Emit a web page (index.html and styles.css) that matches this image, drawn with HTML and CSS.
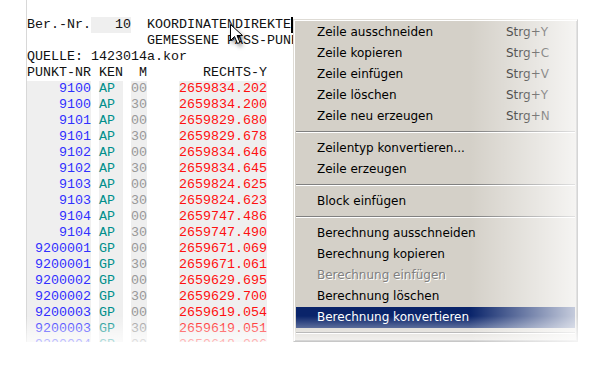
FILE: index.html
```html
<!DOCTYPE html>
<html>
<head>
<meta charset="utf-8">
<link rel="stylesheet" href="styles.css">
</head>
<body>
<div class="screen">
  <div class="editor">
    <div class="line">Ber.-Nr.<span class="cell">   10</span>  KOORDINATENDIREKTE<span class="caret"></span></div>
    <div class="line">               GEMESSENE PASS-PUNKTE</div>
    <div class="line">QUELLE: 1423014a.kor</div>
    <div class="line">PUNKT-NR KEN  M       RECHTS-Y</div>
    <div class="line"><span class="cell nr">    9100</span> <span class="cell ken">AP </span> <span class="cell m">00</span>    <span class="cell y">2659834.202</span></div>
    <div class="line"><span class="cell nr">    9100</span> <span class="cell ken">AP </span> <span class="cell m">30</span>    <span class="cell y">2659834.200</span></div>
    <div class="line"><span class="cell nr">    9101</span> <span class="cell ken">AP </span> <span class="cell m">00</span>    <span class="cell y">2659829.680</span></div>
    <div class="line"><span class="cell nr">    9101</span> <span class="cell ken">AP </span> <span class="cell m">30</span>    <span class="cell y">2659829.678</span></div>
    <div class="line"><span class="cell nr">    9102</span> <span class="cell ken">AP </span> <span class="cell m">00</span>    <span class="cell y">2659834.646</span></div>
    <div class="line"><span class="cell nr">    9102</span> <span class="cell ken">AP </span> <span class="cell m">30</span>    <span class="cell y">2659834.645</span></div>
    <div class="line"><span class="cell nr">    9103</span> <span class="cell ken">AP </span> <span class="cell m">00</span>    <span class="cell y">2659824.625</span></div>
    <div class="line"><span class="cell nr">    9103</span> <span class="cell ken">AP </span> <span class="cell m">30</span>    <span class="cell y">2659824.623</span></div>
    <div class="line"><span class="cell nr">    9104</span> <span class="cell ken">AP </span> <span class="cell m">00</span>    <span class="cell y">2659747.486</span></div>
    <div class="line"><span class="cell nr">    9104</span> <span class="cell ken">AP </span> <span class="cell m">30</span>    <span class="cell y">2659747.490</span></div>
    <div class="line"><span class="cell nr"> 9200001</span> <span class="cell ken">GP </span> <span class="cell m">00</span>    <span class="cell y">2659671.069</span></div>
    <div class="line"><span class="cell nr"> 9200001</span> <span class="cell ken">GP </span> <span class="cell m">30</span>    <span class="cell y">2659671.061</span></div>
    <div class="line"><span class="cell nr"> 9200002</span> <span class="cell ken">GP </span> <span class="cell m">00</span>    <span class="cell y">2659629.695</span></div>
    <div class="line"><span class="cell nr"> 9200002</span> <span class="cell ken">GP </span> <span class="cell m">30</span>    <span class="cell y">2659629.700</span></div>
    <div class="line"><span class="cell nr"> 9200003</span> <span class="cell ken">GP </span> <span class="cell m">00</span>    <span class="cell y">2659619.054</span></div>
    <div class="line"><span class="cell nr"> 9200003</span> <span class="cell ken">GP </span> <span class="cell m">30</span>    <span class="cell y">2659619.051</span></div>
    <div class="line"><span class="cell nr"> 9200004</span> <span class="cell ken">GP </span> <span class="cell m">00</span>    <span class="cell y">2659618.996</span></div>
  </div>

  <div class="menu">
    <div class="item"><span>Zeile ausschneiden</span><span>Strg+Y</span></div>
    <div class="item"><span>Zeile kopieren</span><span>Strg+C</span></div>
    <div class="item"><span>Zeile einfügen</span><span>Strg+V</span></div>
    <div class="item"><span>Zeile löschen</span><span>Strg+Y</span></div>
    <div class="item"><span>Zeile neu erzeugen</span><span>Strg+N</span></div>
    <div class="sep"></div>
    <div class="item"><span>Zeilentyp konvertieren...</span><span></span></div>
    <div class="item"><span>Zeile erzeugen</span><span></span></div>
    <div class="sep"></div>
    <div class="item"><span>Block einfügen</span><span></span></div>
    <div class="sep"></div>
    <div class="item"><span>Berechnung ausschneiden</span><span></span></div>
    <div class="item"><span>Berechnung kopieren</span><span></span></div>
    <div class="item disabled"><span>Berechnung einfügen</span><span></span></div>
    <div class="item"><span>Berechnung löschen</span><span></span></div>
    <div class="item active"><span>Berechnung konvertieren</span><span></span></div>
    <div class="sep"></div>
  </div>

  <div class="fade"></div>

  <svg class="mouse" width="16" height="24" viewBox="0 0 16 24">
    <path d="M0.5 0.5 L0.5 16.5 L4.5 12.5 L7.5 19.5 L10 18.5 L7 11.5 L12.5 11.5 Z" fill="#fff" stroke="#000" stroke-width="1" stroke-linejoin="miter"/>
  </svg>
</div>
</body>
</html>
```

FILE: styles.css
```css
html, body {
  margin: 0;
  padding: 0;
  background: #fff;
}

.screen {
  position: relative;
  width: 593px;
  height: 372px;
  overflow: hidden;
  padding-left: 26px;
  box-sizing: border-box;
}

.editor {
  width: 267px;
  height: 342px;
  box-sizing: border-box;
  border-left: 1px solid #d8d8d8;
  padding-top: 17px;
  overflow: hidden;
  font-family: "Liberation Mono", "Courier New", monospace;
  font-size: 13.333px;
  color: #111;
}

.line {
  height: 16px;
  line-height: 16px;
  white-space: pre;
}

.cell {
  display: inline-block;
  height: 16px;
  vertical-align: top;
  background: #efefef;
}

.nr { color: #3030ff; }
.ken { color: #00908c; }
.m { color: #999; }
.y { color: #ff1010; }

.caret {
  display: inline-block;
  width: 2px;
  height: 16px;
  vertical-align: top;
  background: #000;
}

.menu {
  position: absolute;
  left: 293px;
  top: 19px;
  width: 285px;
  height: 323px;
  box-sizing: border-box;
  padding: 2px 2px;
  background: #d4d0c8;
  border-top: 1px solid #dedbd5;
  border-left: 1px solid #dedbd5;
  border-right: 1px solid #404040;
  border-bottom: 1px solid #404040;
  box-shadow: inset 1px 1px 0 #fff, inset -1px -1px 0 #808080;
  font-family: "DejaVu Sans", Verdana, sans-serif;
  font-size: 12px;
  color: #000;
}

.item {
  display: grid;
  grid-template-columns: 189px 1fr;
  height: 21px;
  line-height: 21px;
  padding-left: 21px;
  white-space: nowrap;
}

.item.disabled {
  color: #808080;
  text-shadow: 1px 1px 0 #fff;
}

.item.active {
  background: #0a246a;
  color: #fff;
}

.sep {
  height: 0;
  margin: 4px 0 5px;
  border-top: 1px solid #808080;
  border-bottom: 1px solid #fff;
}

.fade {
  position: absolute;
  left: 0;
  top: 0;
  width: 593px;
  height: 372px;
  pointer-events: none;
  background:
    linear-gradient(to right, rgba(255,255,255,0) 470px, rgba(255,255,255,0.8) 580px, rgba(255,255,255,0.85) 593px),
    linear-gradient(to bottom, rgba(255,255,255,0) 316px, rgba(255,255,255,0.75) 343px, rgba(255,255,255,0.75) 372px);
}

.mouse {
  position: absolute;
  left: 230px;
  top: 24px;
  filter: drop-shadow(2px 3px 2px rgba(0,0,0,0.45));
}
```
